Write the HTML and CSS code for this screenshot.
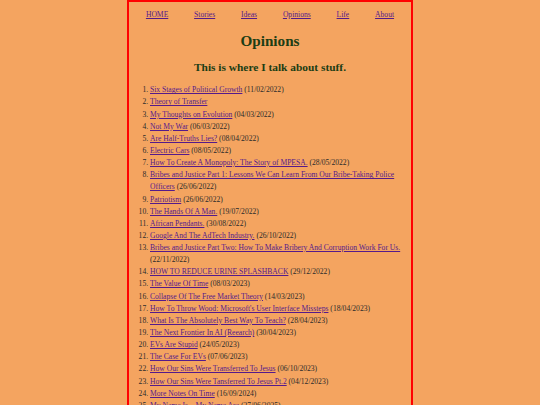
FILE: index.html
```html
<!DOCTYPE html>
<html lang="en">
<head>
<meta charset="utf-8">
<title>Opinions</title>
<link rel="stylesheet" href="styles.css">
</head>
<body>
<div class="page">
  <nav class="nav">
    <a href="#">HOME</a>
    <a href="#">Stories</a>
    <a href="#">Ideas</a>
    <a href="#">Opinions</a>
    <a href="#">Life</a>
    <a href="#">About</a>
  </nav>
  <h1 class="title">Opinions</h1>
  <h2 class="subtitle">This is where I talk about stuff.</h2>
  <ol class="posts">
    <li><a href="#">Six Stages of Political Growth</a> (11/02/2022)</li>
    <li><a href="#">Theory of Transfer</a></li>
    <li><a href="#">My Thoughts on Evolution</a> (04/03/2022)</li>
    <li><a href="#">Not My War</a> (06/03/2022)</li>
    <li><a href="#">Are Half-Truths Lies?</a> (08/04/2022)</li>
    <li><a href="#">Electric Cars</a> (08/05/2022)</li>
    <li><a href="#">How To Create A Monopoly: The Story of MPESA.</a> (28/05/2022)</li>
    <li><a href="#">Bribes and Justice Part 1: Lessons We Can Learn From Our Bribe-Taking Police Officers</a> (26/06/2022)</li>
    <li><a href="#">Patriotism</a> (26/06/2022)</li>
    <li><a href="#">The Hands Of A Man.</a> (19/07/2022)</li>
    <li><a href="#">African Pendants.</a> (30/08/2022)</li>
    <li><a href="#">Google And The AdTech Industry.</a> (26/10/2022)</li>
    <li><a href="#">Bribes and Justice Part Two: How To Make Bribery And Corruption Work For Us.</a> (22/11/2022)</li>
    <li><a href="#">HOW TO REDUCE URINE SPLASHBACK</a> (29/12/2022)</li>
    <li><a href="#">The Value Of Time</a> (08/03/2023)</li>
    <li><a href="#">Collapse Of The Free Market Theory</a> (14/03/2023)</li>
    <li><a href="#">How To Throw Wood: Microsoft's User Interface Missteps</a> (18/04/2023)</li>
    <li><a href="#">What Is The Absolutely Best Way To Teach?</a> (28/04/2023)</li>
    <li><a href="#">The Next Frontier In AI (Reearch)</a> (30/04/2023)</li>
    <li><a href="#">EVs Are Stupid</a> (24/05/2023)</li>
    <li><a href="#">The Case For EVs</a> (07/06/2023)</li>
    <li><a href="#">How Our Sins Were Transferred To Jesus</a> (06/10/2023)</li>
    <li><a href="#">How Our Sins Were Tansferred To Jesus Pt.2</a> (04/12/2023)</li>
    <li><a href="#">More Notes On Time</a> (16/09/2024)</li>
    <li><a href="#">My Name Is... My Name Are</a> (27/06/2025)</li>
  </ol>
</div>
</body>
</html>
```
FILE: styles.css
```css
html, body {
  margin: 0;
  padding: 0;
  background: #f4a460;
}
body {
  font-family: "Liberation Serif", "Times New Roman", serif;
  font-size: 7.6px;
  color: #2b2b2b;
}
.page {
  width: 282px;
  margin: 0 auto;
  border: 2px solid #ff0000;
  border-bottom: none;
  min-height: 420px;
}
a {
  color: #551a8b;
}
.nav {
  display: flex;
  justify-content: space-around;
  padding: 7px 4px 0;
  line-height: 12.16px;
}
.title {
  font-size: 15.2px;
  color: #1b3d14;
  text-align: center;
  margin: 11px 0 0;
}
.subtitle {
  font-size: 11.4px;
  color: #1b3d14;
  text-align: center;
  margin: 10.7px 0 0;
}
.posts {
  margin: 11.4px 8px 0 0;
  padding-left: 21px;
  line-height: 1.6;
}
```
